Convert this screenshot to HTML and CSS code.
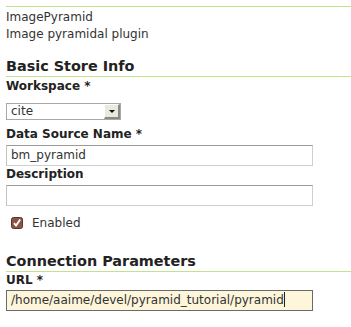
FILE: index.html
```html
<!DOCTYPE html>
<html lang="en">
<head>
  <meta charset="UTF-8" />
  <title>New Data Source - ImagePyramid</title>
  <link rel="stylesheet" href="styles.css">
</head>
<body>
  <div class="info">
    <p>ImagePyramid</p>
    <p>Image pyramidal plugin</p>
  </div>

  <h3>Basic Store Info</h3>
  <label class="label first">Workspace *</label>
  <div class="select">
    <span class="select-value">cite</span>
    <span class="select-button"><span class="arrow"></span></span>
  </div>

  <label class="label gap">Data Source Name *</label>
  <div class="input">bm_pyramid</div>

  <label class="label">Description</label>
  <div class="input"></div>

  <div class="check-row">
    <svg class="checkbox" width="12" height="12" viewBox="0 0 12 12">
      <rect x="0.5" y="0.5" width="11" height="11" rx="2" fill="#8a5544" stroke="#5e3427"/>
      <path d="M3 6.2 L5 8.6 L9.2 2.6" fill="none" stroke="#fff" stroke-width="1.8"/>
    </svg>
    <span>Enabled</span>
  </div>

  <h3 class="section">Connection Parameters</h3>
  <label class="label first url">URL *</label>
  <div class="input focused">/home/aaime/devel/pyramid_tutorial/pyramid<span class="caret"></span></div>
</body>
</html>
```

FILE: styles.css
```css
body {
  margin: 0;
  padding: 6px 0 0 6px;
  font-family: "DejaVu Sans", sans-serif;
  font-size: 12px;
  color: #222;
  background: #fff;
}
.info {
  border-top: 1px solid #c3e290;
  padding-top: 2px;
}
.info p {
  margin: 0;
  line-height: 17px;
  color: #333;
}
h3 {
  margin: 15px 0 0;
  font-size: 14.4px;
  line-height: 17px;
  padding-bottom: 1px;
  border-bottom: 1px solid #c3e290;
}
h3.section {
  margin-top: 23px;
}
.label {
  display: block;
  font-weight: bold;
  line-height: 14px;
  margin-top: 1px;
}
.label.first {
  margin-top: 2px;
}
.label.url {
  margin-top: 1px;
}
.label.gap {
  margin-top: 7px;
}
.select {
  display: flex;
  width: 115px;
  height: 17px;
  margin-top: 10px;
  box-sizing: border-box;
  border: 1px solid #a8a8a8;
  background: #fff;
}
.select-value {
  flex: 1;
  padding-left: 4px;
  line-height: 15px;
  color: #333;
}
.select-button {
  display: flex;
  align-items: center;
  justify-content: center;
  width: 16px;
  box-sizing: border-box;
  background: #ebe7e1;
  border-top: 1px solid #fff;
  border-left: 1px solid #fff;
  border-right: 2px solid #8a8a8a;
  border-bottom: 2px solid #8a8a8a;
}
.arrow {
  width: 0;
  height: 0;
  border-left: 3px solid transparent;
  border-right: 3px solid transparent;
  border-top: 3px solid #111;
}
.input {
  width: 307px;
  height: 21px;
  margin-top: 4px;
  box-sizing: border-box;
  padding: 0 4px;
  line-height: 19px;
  color: #333;
  border: 1px solid;
  border-color: #9a9a9a #cfcfcf #cfcfcf #c4c4c4;
  background: #fff;
}
.input.focused {
  margin-top: 3px;
  background: #fdf6db;
  border-color: #6a6a6a;
}
.caret {
  display: inline-block;
  width: 1px;
  height: 15px;
  vertical-align: -3px;
  background: #222;
}
.check-row {
  display: flex;
  align-items: center;
  gap: 9px;
  margin-top: 10px;
  padding-left: 5px;
  line-height: 14px;
  color: #333;
}
```
